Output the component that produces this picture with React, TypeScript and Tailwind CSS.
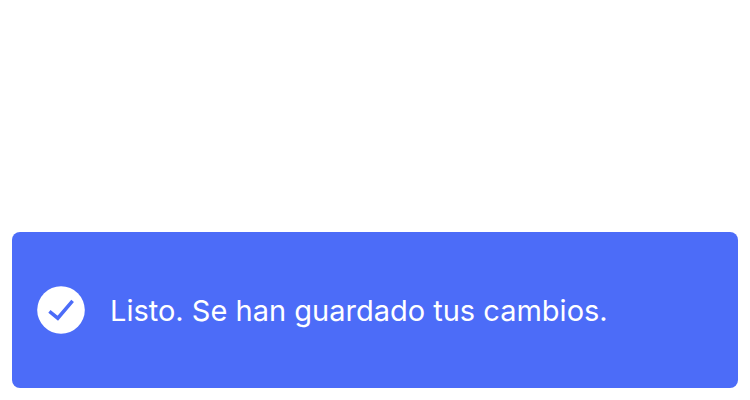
export default function App() {
  return (
    <main className="flex h-[400px] w-[750px] flex-col justify-end bg-white px-3 pb-3">
      <div role="status" className="flex h-[156px] items-center rounded-lg bg-[#4c6cf8] pl-[25px]">
        <svg className="size-12 shrink-0" viewBox="0 0 48 48" fill="none" aria-hidden="true">
          <circle cx="24" cy="24" r="23.8" fill="white" />
          <path d="M12.4 25.4L20.8 32.2L35.6 14.8" stroke="#4c6cf8" strokeWidth="3.5" />
        </svg>
        <p className="ml-[25px] whitespace-nowrap pt-0.5 font-['Inter',sans-serif] text-[29px] font-normal leading-9 text-white">
          Listo. Se han guardado tus cambios.
        </p>
      </div>
    </main>
  );
}
